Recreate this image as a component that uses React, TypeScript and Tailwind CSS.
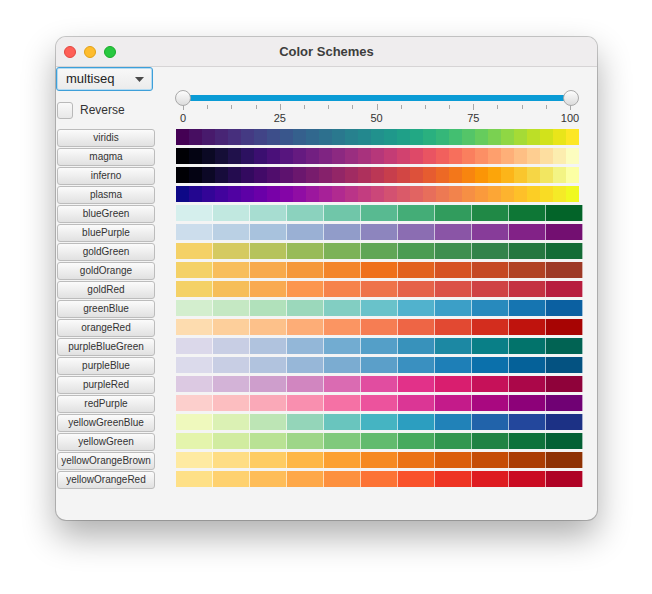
import React from 'react';

// Vega colour schemes, 6 hex chars per colour
const continuous: [string, string][] = [
    ['viridis', '440154470e61481a6c482575472f7d443a834144873d4e8a39568c35608d31688e2d708e2a788e27818e23888e21918d1f988b1fa08822a8842ab07f35b77943bf7154c56866cc5d7ad1518fd744a5db36bcdf27d2e21be9e51afde725'],
    ['magma', '0000040404130b0924150e3720114b2c11603b0f704a107957157e651a80721f817f24828c29819a2e80a8327db6377ac43c75d1426fde4968e95462f1605df76f5cfa7f5efc8f65fe9f6dfeaf78febf84fece91fddea0fcedaffcfdbf'],
    ['inferno', '0000040403130c0826170c3b240c4f330a5f420a68500d6c5d126e6b176e781c6d86216b932667a12b62ae305cbb3755c73e4cd24644dd513ae65c30ed6925f3771af8850ffb9506fca50afcb519fac62df6d645f2e661f3f484fcffa4'],
    ['plasma', '0d088723069033059742039d5002a25d01a66a00a87801a88405a7900da49c179ea72198b12a90ba3488c33d80cb4779d35171da5a69e16462e76e5bed7953f2834cf68f44fa9a3cfca636fdb32ffec029fcce25f9dc24f5ea27f0f921']
];

const discrete: [string, string][] = [
    ['blueGreen', 'd5efedc1e8e0a7ddd18bd2be70c6a958ba9144ad77319c5d2089460e7736036429'],
    ['bluePurple', 'ccddecbad0e4a8c2dd9ab0d4919cc98d85be8b6db28a55a6873c99822287730f71'],
    ['goldGreen', 'f4d166d5ca60b6c35c98bb597cb25760a6564b9c533f8f4f33834a257740146c36'],
    ['goldOrange', 'f4d166f8be5cf8aa4cf5983bf3852aef701be2621fd65322c54923b142239e3a26'],
    ['goldRed', 'f4d166f6be59f9aa51fc964ef6834bee734ae56249db5247cf4244c43141b71d3e'],
    ['greenBlue', 'd3eecec5e8c3b1e1bb9bd8bb82cec269c2ca51b2cd3c9fc7288abd1675b10b60a1'],
    ['orangeRed', 'fddcaffdcf9bfdc18afdad77fb9562f67d53ee6545e24932d32d1ebf130da70403'],
    ['purpleBlueGreen', 'dbd8eac8cee4b0c3de93b7d872acd1549fc83892bb1c88a3097f8702736b016353'],
    ['purpleBlue', 'dbdaebc8cee4b1c3de97b7d87bacd15b9fc93a90c01e7fb70b70ab056199045281'],
    ['purpleRed', 'dcc9e2d3b3d7ce9eccd186c0da6bb2e14da0e23189d91e6fc61159ab07498f023a'],
    ['redPurple', 'fccfccfcbec0faa9b8f98faff571a5ec539ddb3695c41b8aa908808d0179700174'],
    ['yellowGreenBlue', 'eff9bddbf1b4bde5b594d5b969c5be45b4c22c9ec02182b82163aa23479c1c3185'],
    ['yellowGreen', 'e4f4acd1eca0b9e2949ed68880c97c62bb6e47aa5e3297502083440e723b036034'],
    ['yellowOrangeBrown', 'feeaa1fedd84fecc63feb746fca031f68921eb7215db5e0bc54c05ab3d038f3204'],
    ['yellowOrangeRed', 'fee087fed16ffebd59fea849fd903efc7335f9522bee3423de1b20ca0b22af0225']
];

const split = (s: string) => s.match(/.{6}/g)!.map((c) => '#' + c);

const font = { fontFamily: '"Liberation Sans", Arial, sans-serif' };

function SchemeButton({ name }: { name: string }) {
    return (
        <button className="ml-[1px] w-[98px] h-[18px] shrink-0 rounded-[3px] border border-[#bcbcbc] bg-gradient-to-b from-[#fbfbfb] to-[#e1e1e1] text-[10px] leading-none text-[#333] flex items-center justify-center">
            {name}
        </button>
    );
}

function Slider() {
    const ticks = Array.from({ length: 17 }, (_, i) => i);
    const labels = [0, 25, 50, 75, 100];
    const span = 387;
    return (
        <div className="relative w-[404px] h-[38px]">
            <div className="absolute left-[8px] right-[8px] top-[4px] h-[6px] bg-[#0a9bd5]" />
            {ticks.map((i) => (
                <div
                    key={i}
                    className={`absolute w-px bg-[#a8a8a8] ${i % 4 === 0 ? 'top-[13px] h-[6px]' : 'top-[14px] h-[4px]'}`}
                    style={{ left: 8 + (span * i) / 16 }}
                />
            ))}
            {labels.map((v, i) => (
                <div
                    key={v}
                    className="absolute top-[22px] -translate-x-1/2 text-[11px] leading-[11px] text-[#333]"
                    style={{ left: 8 + (span * i) / 4 }}
                >
                    {v}
                </div>
            ))}
            <div className="absolute left-0 top-[-1px] w-[16px] h-[16px] rounded-full border border-[#a9a9a9] bg-gradient-to-b from-[#fdfdfd] to-[#dcdcdc]" />
            <div className="absolute right-0 top-[-1px] w-[16px] h-[16px] rounded-full border border-[#a9a9a9] bg-gradient-to-b from-[#fdfdfd] to-[#dcdcdc]" />
        </div>
    );
}

export default function App() {
    return (
        <div className="w-[652px] h-[594px] bg-white pt-[37px] pl-[56px]" style={font}>
            <div className="w-[541px] h-[483px] rounded-[10px] overflow-hidden bg-[#f4f4f4] shadow-[0_0_0_1px_rgba(0,0,0,0.2),0_16px_34px_rgba(0,0,0,0.32)]">
                {/* Title bar */}
                <div className="h-[30px] bg-[#efedee] border-b border-[#d6d4d5] grid grid-cols-[1fr_auto_1fr] items-center">
                    <div className="flex gap-[8px] pl-[8px]">
                        <span className="w-[12px] h-[12px] rounded-full bg-[#fe5f57] border border-[#e2463f]" />
                        <span className="w-[12px] h-[12px] rounded-full bg-[#febc2e] border border-[#e1a116]" />
                        <span className="w-[12px] h-[12px] rounded-full bg-[#28c840] border border-[#1aab29]" />
                    </div>
                    <div className="text-[13px] font-bold text-[#3d3d3d]">Color Schemes</div>
                    <div />
                </div>

                {/* Controls */}
                <div className="flex h-[62px]">
                    <div className="w-[98px] flex flex-col">
                        <div className="w-[97px] h-[24px] rounded-[3px] border border-[#3d9fd9] shadow-[inset_0_0_0_1px_#b4dbf2] bg-gradient-to-b from-[#f8f8f8] to-[#ebebeb] flex items-center justify-between pl-[9px] pr-[8px]">
                            <span className="text-[13px] text-[#222]">multiseq</span>
                            <svg width="9" height="5" viewBox="0 0 9 5">
                                <polygon points="0,0 9,0 4.5,5" fill="#4a4a4a" />
                            </svg>
                        </div>
                        <div className="mt-[10px] flex items-center">
                            <div className="ml-[1px] w-[16px] h-[17px] rounded-[3px] border border-[#b9b9b9] bg-gradient-to-b from-[#f9f9f9] to-[#e8e8e8]" />
                            <span className="ml-[7px] text-[12px] text-[#333]">Reverse</span>
                        </div>
                    </div>
                    <div className="ml-[21px] pt-[24px]">
                        <Slider />
                    </div>
                </div>

                {/* Scheme rows */}
                <div className="flex flex-col gap-[1px]">
                    {continuous.map(([name, hex]) => (
                        <div key={name} className="flex h-[18px]">
                            <SchemeButton name={name} />
                            <div className="ml-[21px] flex h-[16px]">
                                {split(hex).map((c, i) => (
                                    <div key={i} className="w-[13px] h-full" style={{ backgroundColor: c }} />
                                ))}
                            </div>
                        </div>
                    ))}
                    {discrete.map(([name, hex]) => (
                        <div key={name} className="flex h-[18px]">
                            <SchemeButton name={name} />
                            <div className="ml-[21px] flex h-[16px]">
                                {split(hex).map((c, i) => (
                                    <div key={i} className="w-[37px] h-full border-r border-white/60" style={{ backgroundColor: c }} />
                                ))}
                            </div>
                        </div>
                    ))}
                </div>
            </div>
        </div>
    );
}
